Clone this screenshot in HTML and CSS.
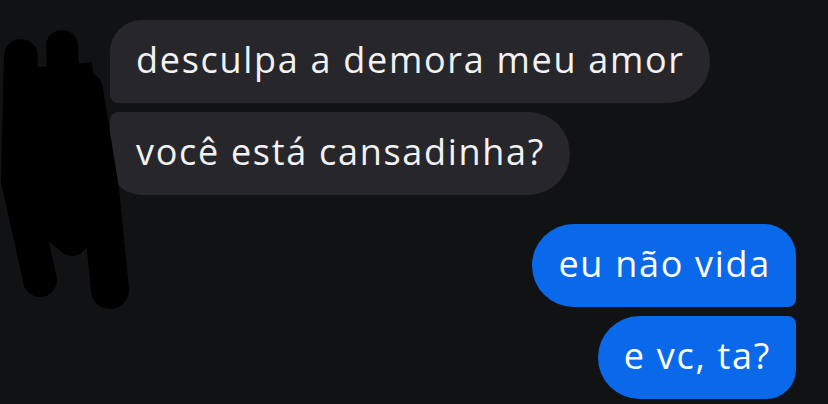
FILE: index.html
```html
<!DOCTYPE html>
<html lang="pt">
<head>
<meta charset="utf-8">
<link rel="stylesheet" href="styles.css">
</head>
<body>
<div class="chat">
  <div class="group received">
    <div class="bubble gray first">desculpa a demora meu amor</div>
    <div class="bubble gray last">você está cansadinha?</div>
  </div>
  <div class="group sent">
    <div class="bubble blue first">eu não vida</div>
    <div class="bubble blue last">e vc, ta?</div>
  </div>
  <svg class="redact" width="140" height="320" viewBox="0 0 140 320" aria-hidden="true">
    <g fill="none" stroke="#000" stroke-linecap="round" stroke-linejoin="round">
      <path d="M21 56 L18 180 L40 280" stroke-width="34"/>
      <path d="M62 46 L66 150 L72 240" stroke-width="32"/>
      <path d="M84 90 L100 190 L110 290" stroke-width="38"/>
    </g>
    <polygon points="8,70 92,62 106,200 60,250 20,220" fill="#000"/>
  </svg>
</div>
</body>
</html>
```
FILE: styles.css
```css
html, body {
  margin: 0;
  padding: 0;
  background: #111214;
}
.chat {
  position: relative;
  width: 828px;
  height: 404px;
  overflow: hidden;
  padding-top: 20px;
  box-sizing: border-box;
  font-family: "Open Sans", "Noto Sans", sans-serif;
}
.group {
  display: flex;
  flex-direction: column;
  gap: 9px;
}
.received {
  align-items: flex-start;
  padding-left: 110px;
}
.sent {
  align-items: flex-end;
  padding-right: 32px;
  margin-top: 29px;
}
.bubble {
  height: 83px;
  display: flex;
  align-items: center;
  box-sizing: border-box;
  padding: 0 25px 4px 26px;
  font-size: 36px;
  letter-spacing: 1.7px;
  color: #f2f2f4;
  white-space: nowrap;
}
.gray { background: #27272b; }
.blue { background: #0a69ea; color: #ffffff; }
.gray.first { border-radius: 32px 42px 42px 8px; }
.gray.last  { border-radius: 8px 42px 42px 32px; }
.blue.first { border-radius: 42px 32px 8px 42px; }
.blue.last  { border-radius: 42px 8px 30px 42px; }
.redact {
  position: absolute;
  left: 0;
  top: 0;
}
```
